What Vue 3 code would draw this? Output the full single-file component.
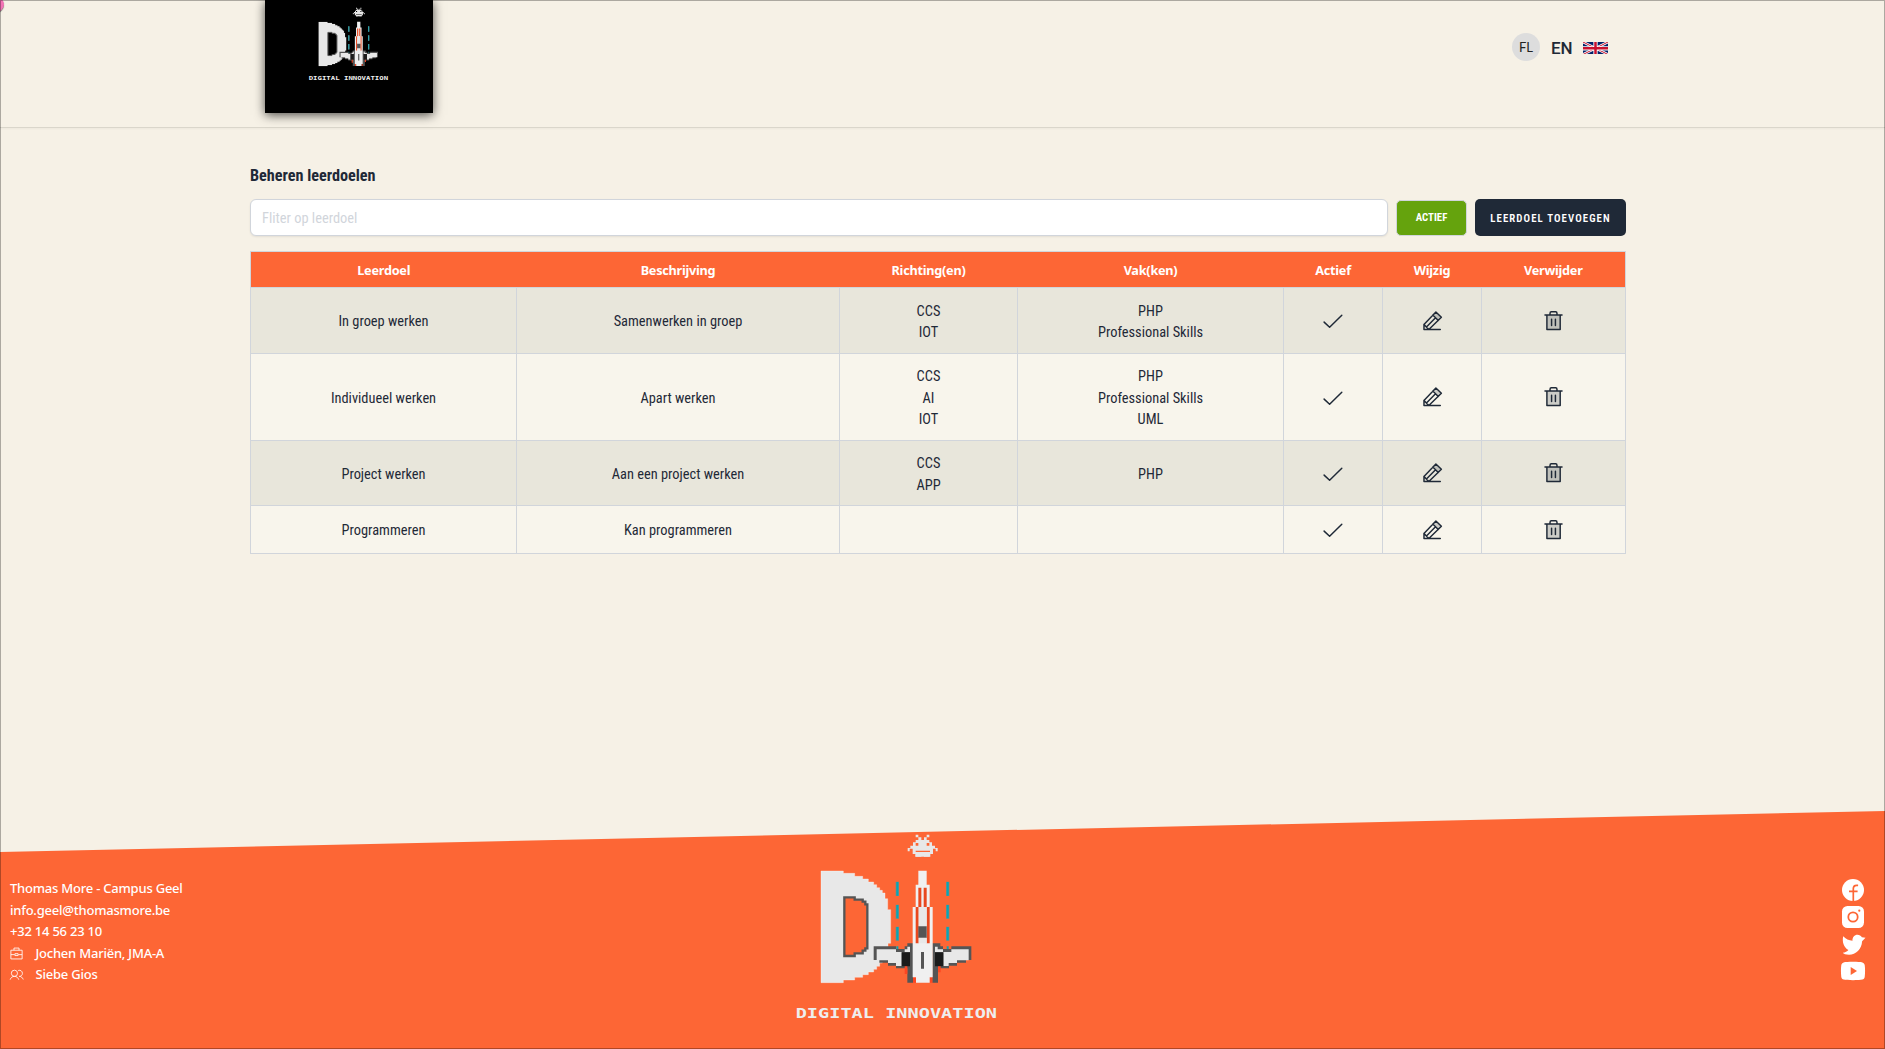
<script setup>
const columns = [
  { label: 'Leerdoel', cls: 'w-goal' },
  { label: 'Beschrijving', cls: 'w-desc' },
  { label: 'Richting(en)', cls: 'w-dir' },
  { label: 'Vak(ken)', cls: 'w-goal' },
  { label: 'Actief', cls: 'w-icon' },
  { label: 'Wijzig', cls: 'w-icon' },
  { label: 'Verwijder', cls: 'w-del' },
]
const rows = [
  { goal: 'In groep werken', desc: 'Samenwerken in groep', dirs: ['CCS', 'IOT'], courses: ['PHP', 'Professional Skills'], h: 66 },
  { goal: 'Individueel werken', desc: 'Apart werken', dirs: ['CCS', 'AI', 'IOT'], courses: ['PHP', 'Professional Skills', 'UML'], h: 87 },
  { goal: 'Project werken', desc: 'Aan een project werken', dirs: ['CCS', 'APP'], courses: ['PHP'], h: 65 },
  { goal: 'Programmeren', desc: 'Kan programmeren', dirs: [], courses: [], h: 48 },
]
</script>

<template>
  <div class="page">
    <svg class="defs" width="0" height="0" aria-hidden="true">
      <symbol id="logo" viewBox="40 40 620 570">
        <!-- invader -->
        <g fill="#e8e8e8">
          <path d="M405 45h8v8h-8zM438 45h8v8h-8zM413 53h9v8h-9zM430 53h8v8h-8z" />
          <path fill-rule="evenodd" d="M405 61h41v7h8v10h9v7h8v10h-6v-8h-8v16h-8v8h-45v-8h-8v-16h-9v8h-6v-10h8v-7h8v-10h8zM405 70v8h8v-8zM438 70v8h8v-8zM405 93v4h43v-4z" />
          <path d="M405 105h17v6h-17zM430 105h17v6h-17z" />
        </g>
        <!-- letter D -->
        <path fill="#e8e8e8" stroke="#fff" stroke-opacity=".5" stroke-width="2" d="M121 154H188V161H222V170H246V178H263V187H279V195H288V204H297V212H305V220H313V237H321V270H330V371H322V405H313V422H305V430H297V440H288V449H279V457H263V465H246V473H222V481H188V489H121zM191 233V409H222V401H246V393H254V386H260V254H254V246H246V240H222V233z" fill-rule="evenodd" />
        <path fill="none" stroke="#555" stroke-width="7" d="M191 233V409H222V401H246V393H254V386H260V254H254V246H246V240H222V233z" />
        <!-- laser trails -->
        <path stroke="#6f8f8a" stroke-width="10" d="M350 186v43M350 255v42M350 321v42M501 186v43M501 255v42M501 321v42" />
        <path stroke="#08a5b5" stroke-width="6" d="M350 187v41M350 256v40M350 322v40M350 380v8M501 187v41M501 256v40M501 322v40M501 380v8" />
        <!-- wings -->
        <path fill="#555" d="M279 380h67v8h26v-8h8v-9h17v118h-17v-43h-34v-8h-24v-9h-26v-8h-17zM572 380h-60v8h-25v-8h-8v-9h-24v118h17v-43h33v-8h24v-9h27v-8h16z" />
        <path fill="#e8e8e8" d="M288 389h58v8h26v-8h8v-8h8v17h-25v41h-17v-9h-24v-8h-34zM564 389h-52v8h-25v-8h-16v-8h-8v17h25v41h16v-9h25v-8h35z" />
        <path fill="#1b1b1b" d="M363 398h25v42h-25zM463 398h25v42h-25z" />
        <path fill="#fd4622" d="M372 440h8v23h-8zM472 440h8v18h-8zM397 473h9v16h-9zM447 473h8v16h-8z" />
        <!-- fuselage -->
        <path fill="#f0f0f0" d="M413 153h25v42h9v67h9v211h-9v16h-41v-16h-10V262h9v-67h8z" />
        <path fill="#e9481f" d="M413 204h9v58h-9zM429 204h9v58h-9zM405 262h9v109h-9zM438 262h9v109h-9z" />
        <path fill="#e8e8e8" d="M414 262h24v58h-24zM414 355h24v16h-24z" />
        <path fill="#555" d="M413 320h25v34h-25zM421 397h9v50h-9z" />
        <text x="45" y="595" font-family="DejaVu Sans Mono" font-size="42" font-weight="700" fill="#eee" textLength="604" lengthAdjust="spacingAndGlyphs">DIGITAL INNOVATION</text>
      </symbol>
    </svg>

    <header class="top">
      <div class="brand"><svg><use href="#logo" /></svg></div>
      <div class="user">
        <span class="avatar">FL</span>
        <span class="lang">EN</span>
        <svg class="flag" viewBox="0 0 50 25">
          <path fill="#012169" d="M0 0h50v25H0z" />
          <path stroke="#fff" stroke-width="5" d="M0 0l50 25M50 0L0 25" />
          <path stroke="#c8102e" stroke-width="2" d="M0 0l50 25M50 0L0 25" />
          <path stroke="#fff" stroke-width="8.5" d="M25 0v25M0 12.5h50" />
          <path stroke="#c8102e" stroke-width="5" d="M25 0v25M0 12.5h50" />
        </svg>
      </div>
    </header>

    <main>
      <h1>Beheren leerdoelen</h1>
      <div class="toolbar">
        <input type="text" placeholder="Fliter op leerdoel" />
        <button class="active">ACTIEF</button>
        <button class="add">LEERDOEL TOEVOEGEN</button>
      </div>
      <table>
        <colgroup><col v-for="c in columns" :key="c.label" :class="c.cls" /></colgroup>
        <thead>
          <tr><th v-for="c in columns" :key="c.label">{{ c.label }}</th></tr>
        </thead>
        <tbody>
          <tr v-for="r in rows" :key="r.goal" :style="{ height: r.h + 'px' }">
            <td>{{ r.goal }}</td>
            <td>{{ r.desc }}</td>
            <td><div v-for="d in r.dirs" :key="d">{{ d }}</div></td>
            <td><div v-for="c in r.courses" :key="c">{{ c }}</div></td>
            <td>
              <svg class="icon check" viewBox="0 0 24 24"><path d="M2.3 13.2l6 5.7L21.6 5.8" /></svg>
            </td>
            <td>
              <svg class="icon pencil" viewBox="0 0 24 24">
                <path class="tone" d="M12.3 5.5L15.7 2.1 21.7 8 18.3 11.4z" />
                <path d="M8 21.3H2.7V15.7L15.7 2.1 21.7 8zM12.3 5.5l6 5.9M2.7 15.7L8 21.3M15.3 8.5L5.4 18.5M8 21.3h12.5" />
              </svg>
            </td>
            <td>
              <svg class="icon trash" viewBox="0 0 24 24">
                <path class="tone" d="M4.8 5.5h14.5v15.8H4.8z" />
                <path d="M2.7 5.5h18.6M4.8 5.5v15.8h14.5V5.500M8.200 5.500V3.500q0-1.500 1.500-1.500h4.600q1.500 0 1.500 1.500v2M9.900 10v7M14.100 10v7" />
              </svg>
            </td>
          </tr>
        </tbody>
      </table>
    </main>

    <footer>
      <div class="contact">
        <div>Thomas More - Campus Geel</div>
        <div>info.geel@thomasmore.be</div>
        <div>+32 14 56 23 10</div>
        <div class="person">
          <svg viewBox="0 0 16 16"><path d="M2 4.5h12v9.3H2zM5.3 4.5V2.2h5.4v2.3M2 9.2h4M10 9.2h4M6.3 8.2h3.4v2H6.3z" /></svg>
          <span>Jochen Mariën, JMA-A</span>
        </div>
        <div class="person">
          <svg viewBox="0 0 16 16"><circle cx="5.8" cy="6.7" r="3.3" /><path d="M1.2 13.5c.8-2.3 2.4-3.5 4.6-3.5s3.8 1.2 4.6 3.5M9.8 3.7c2.5-.8 4.5.8 4.5 3s-1.5 3.2-3.3 3.3c2 0 3.3 1.2 4.2 3.3" /></svg>
          <span>Siebe Gios</span>
        </div>
      </div>
      <svg class="footer-logo"><use href="#logo" /></svg>
      <div class="social">
        <svg viewBox="0 0 24 24"><circle cx="12" cy="12" r="11" fill="#fff" /><path d="M12.3 23V10.8q0-3.400 3.300-3.400h1.500M8 13.300h8.600" stroke="#fd6635" stroke-width="1.7" fill="none" /></svg>
        <svg viewBox="0 0 24 24"><rect x="1" y="1" width="22" height="22" rx="5.5" fill="#fff" /><circle cx="12" cy="12" r="4.7" stroke="#fd6635" stroke-width="1.8" fill="none" /><circle cx="18.3" cy="5.7" r="1.1" fill="#fd6635" /></svg>
        <svg class="bird" viewBox="0 0 24 24"><path fill="#fff" d="M24.500 4.300l-3.400 3.400c-.4 8-6.300 13.500-13 13.500-3.100 0-5.700-.8-6.300-2 2.400-.2 4.500-1.200 5.600-2.700C2.800 14 .9 8.500 2.200 2.800c2.500 2.700 5.700 4.200 9.300 4.500-.3-3.400 2-6 5-6 1.900 0 3.500 1 4.400 2.500z" /></svg>
        <svg viewBox="0 0 24 24"><path fill="#fff" d="M12 2.800c4 0 8 .2 9.400.6 1.300.4 2 1.300 2.300 2.700.5 3.600.5 8 0 11.800-.3 1.400-1 2.300-2.300 2.700-2.800.8-16 .8-18.800 0C1.300 20.200.6 19.300.3 17.900c-.5-3.800-.5-8.200 0-11.800.3-1.400 1-2.300 2.300-2.700 1.400-.4 5.400-.6 9.400-.6z" /><path fill="#fd6635" d="M9.700 8l6.300 4-6.300 4z" /></svg>
      </div>
    </footer>
    <span class="cursor-dot"></span>
    <span class="frame"></span>
  </div>
</template>

<style>
body { margin: 0; }
</style>

<style scoped>
* { box-sizing: border-box; }
.page {
  position: relative;
  width: 100%;
  height: 1049px;
  overflow: hidden;
  display: flex;
  flex-direction: column;
  background: #f6f1e6;
  color: #1f2937;
  font-family: "Roboto Condensed", Roboto, sans-serif;
  font-stretch: 75%;
}
.defs { position: absolute; }
.top {
  flex: none;
  height: 128px;
  padding: 0 277px 0 265px;
  display: flex;
  justify-content: space-between;
  align-items: flex-start;
  border-bottom: 1px solid #dad6cb;
  box-shadow: 0 1px 2px rgba(0, 0, 0, .04);
}
.brand {
  width: 168px;
  height: 113px;
  padding: 7px 0 0 43px;
  background: #000;
  box-shadow: 0 2px 10px rgba(0, 0, 0, .7);
}
.brand svg { display: block; width: 81.6px; height: 75px; }
.user { display: flex; align-items: center; height: 28px; margin-top: 32.5px; }
.avatar {
  width: 28px;
  height: 28px;
  border-radius: 50%;
  background: #ddd;
  color: #222;
  font: 13px/28px Lato, sans-serif;
  text-align: center;
}
.lang { margin-left: 11px; width: 21px; font: 500 17px/28px Roboto, sans-serif; font-stretch: 92%; padding-top: 3px; }
.flag { width: 25px; height: 12.5px; margin: 3px 0 0 11px; }
main { width: 1376px; margin-left: 250px; flex: 1; }
h1 { margin: 38px 0 0; height: 20px; font-size: 16.2px; line-height: 20px; font-weight: 700; }
.toolbar { display: flex; align-items: center; gap: 8px; margin-top: 13px; height: 37px; }
input {
  flex: 1;
  height: 37px;
  padding: 1px 11px 0;
  border: 1px solid #d1d5db;
  border-radius: 6px;
  background: #fff;
  box-shadow: 0 1px 2px rgba(0, 0, 0, .08);
  font: inherit;
  font-size: 14.4px;
}
input::placeholder { color: #d1d5db; opacity: 1; }
button { border-radius: 5px; color: #fff; font: inherit; font-weight: 700; padding: 0; white-space: nowrap; }
.active { width: 71px; height: 36px; border: 1px solid #d1d5db; background: #65a30d; font-size: 10.8px; }
.add { width: 151px; height: 37px; padding-top: 2px; border: 0; background: #1f2937; font-size: 10.8px; font-weight: 600; letter-spacing: 1.1px; }
table {
  margin-top: 15px;
  width: 1376px;
  table-layout: fixed;
  border-collapse: collapse;
  font-size: 14.4px;
  line-height: 21.5px;
  text-align: center;
}
.w-goal { width: 266px; }
.w-desc { width: 323px; }
.w-dir { width: 178px; }
.w-icon { width: 99px; }
.w-del { width: 144px; }
thead { background: #fd6635; color: #fff; border: 1px solid #d1d5db; }
th { height: 36px; padding: 1px 0 0; font: 700 12.7px/20px "Noto Sans", sans-serif; letter-spacing: -.25px; }
td { border: 1px solid #d1d5db; padding: 3px 0 0; }
tbody tr { background: #f8f5ec; }
tbody tr:nth-child(odd) { background: #e8e6db; }
.icon { display: block; width: 22px; height: 22px; margin: -3px auto 0; fill: none; stroke: #1f2937; stroke-width: 1.6; stroke-linecap: round; stroke-linejoin: round; }
.check { margin-top: -2px; }
.pencil { transform: translateX(.5px); }
.trash { transform: translateX(-.5px); }
.icon .tone { fill: #1f2937; fill-opacity: .2; stroke: none; }
footer {
  flex: none;
  height: 238px;
  padding: 67px 20px 0 10px;
  display: grid;
  grid-template-columns: 783.5px 1fr auto;
  align-items: start;
  background: #fd6635;
  clip-path: polygon(0 41px, 100% 0, 100% 100%, 0 100%);
}
.contact { color: #fff; font: 500 13px/21.5px "Noto Sans", sans-serif; letter-spacing: -.22px; }
.person { display: flex; align-items: center; gap: 11.5px; }
.person svg { width: 15px; height: 15px; margin-left: -1px; fill: none; stroke: #fff; stroke-width: .9; }
.footer-logo { width: 206.7px; height: 190px; margin-top: -45px; }
.social { display: flex; flex-direction: column; gap: 3px; }
.social svg { width: 24px; height: 24px; overflow: visible; }
.bird { transform: translateY(1.5px); }
.frame { position: absolute; inset: 0; border: 1px solid rgba(0, 0, 0, .3); }
.cursor-dot { position: absolute; left: -12px; top: -3px; width: 16px; height: 15px; border-radius: 50%; background: #f472b6; box-shadow: 0 1px 1px rgba(0, 0, 0, .5); }
</style>
